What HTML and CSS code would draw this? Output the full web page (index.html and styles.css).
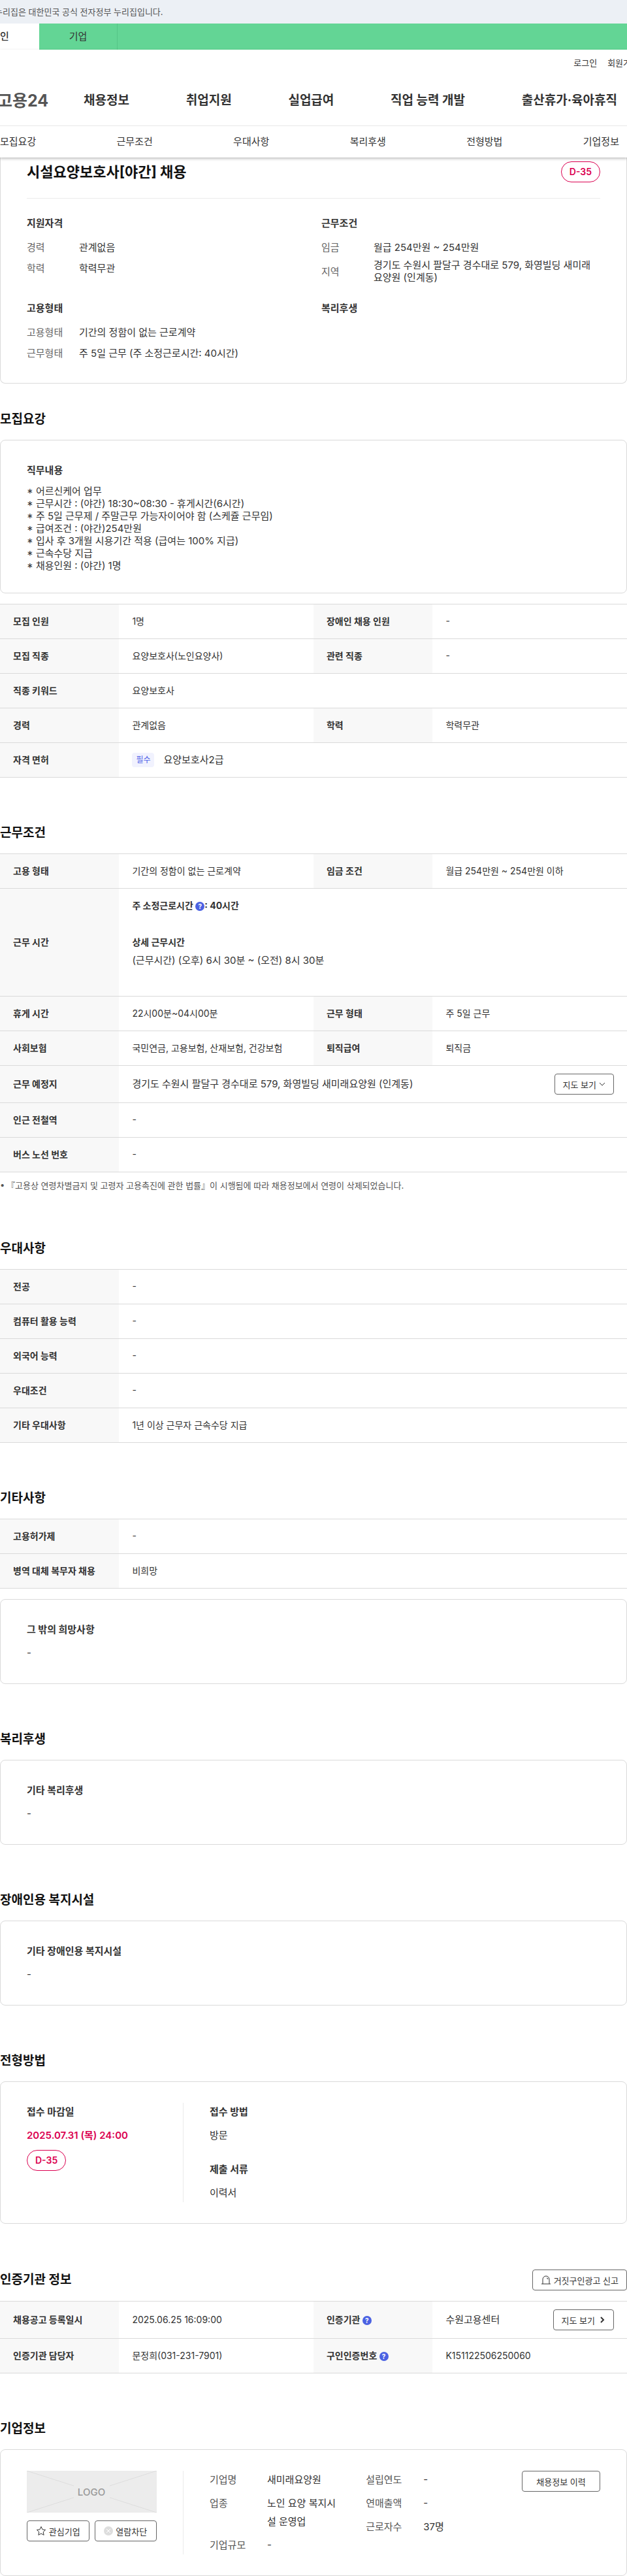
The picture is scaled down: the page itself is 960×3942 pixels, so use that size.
FILE: index.html
```html
<!DOCTYPE html>
<html lang="ko">
<head>
    <meta charset="UTF-8">
    <meta name="viewport" content="width=device-width, initial-scale=1.0">
    <title>시설요양보호사[야간] 채용 - 고용24</title>
    <link rel="stylesheet" href="styles.css">
</head>
<body>
    <div class="gov-banner"><p>누리집은 대한민국 공식 전자정부 누리집입니다.</p></div>
    <div class="site-tabs">
        <a class="site-tab active" href="#">개인</a>
        <a class="site-tab" href="#">기업</a>
    </div>
    <header class="header">
        <div class="util">
            <a href="#">로그인</a>
            <a href="#">회원가입</a>
        </div>
        <div class="gnb">
            <a class="logo" href="#">고용24</a>
            <nav class="gnb-menu">
                <a href="#">채용정보</a>
                <a href="#">취업지원</a>
                <a href="#">실업급여</a>
                <a href="#">직업 능력 개발</a>
                <a href="#">출산휴가·육아휴직</a>
            </nav>
        </div>
        <nav class="anchor-menu">
            <a href="#recruit">모집요강</a>
            <a href="#work">근무조건</a>
            <a href="#prefer">우대사항</a>
            <a href="#welfare">복리후생</a>
            <a href="#apply">전형방법</a>
            <a href="#company">기업정보</a>
        </nav>
    </header>

    <main>
        <!-- 채용 요약 -->
        <div class="card summary">
            <div class="summary-top">
                <h1>시설요양보호사[야간] 채용</h1>
                <span class="dday">D-35</span>
            </div>
            <div class="summary-grid">
                <div>
                    <h3>지원자격</h3>
                    <dl>
                        <div><dt>경력</dt><dd>관계없음</dd></div>
                        <div><dt>학력</dt><dd>학력무관</dd></div>
                    </dl>
                </div>
                <div>
                    <h3>근무조건</h3>
                    <dl>
                        <div><dt>임금</dt><dd>월급 254만원 ~ 254만원</dd></div>
                        <div><dt>지역</dt><dd>경기도 수원시 팔달구 경수대로 579, 화영빌딩 새미래요양원 (인계동)</dd></div>
                    </dl>
                </div>
                <div>
                    <h3>고용형태</h3>
                    <dl>
                        <div><dt>고용형태</dt><dd>기간의 정함이 없는 근로계약</dd></div>
                        <div><dt>근무형태</dt><dd>주 5일 근무 (주 소정근로시간: 40시간)</dd></div>
                    </dl>
                </div>
                <div>
                    <h3>복리후생</h3>
                </div>
            </div>
        </div>

        <section class="section first" id="recruit">
            <h2>모집요강</h2>
            <div class="card">
                <h3>직무내용</h3>
                <p class="job-desc">* 어르신케어 업무<br>
                * 근무시간 : (야간) 18:30~08:30 - 휴게시간(6시간)<br>
                * 주 5일 근무제 / 주말근무 가능자이어야 함 (스케쥴 근무임)<br>
                * 급여조건 : (야간)254만원<br>
                * 입사 후 3개월 시용기간 적용 (급여는 100% 지급)<br>
                * 근속수당 지급<br>
                * 채용인원 : (야간) 1명</p>
            </div>
            <table class="table spaced">
                <colgroup><col class="col-th"><col class="col-td"><col class="col-th"><col class="col-td"></colgroup>
                <tr><th>모집 인원</th><td>1명</td><th>장애인 채용 인원</th><td>-</td></tr>
                <tr><th>모집 직종</th><td>요양보호사(노인요양사)</td><th>관련 직종</th><td>-</td></tr>
                <tr><th>직종 키워드</th><td colspan="3">요양보호사</td></tr>
                <tr><th>경력</th><td>관계없음</td><th>학력</th><td>학력무관</td></tr>
                <tr><th>자격 면허</th><td colspan="3"><div class="license"><span class="tag">필수</span>요양보호사2급</div></td></tr>
            </table>
        </section>

        <section class="section" id="work">
            <h2>근무조건</h2>
            <table class="table">
                <colgroup><col class="col-th"><col class="col-td"><col class="col-th"><col class="col-td"></colgroup>
                <tr><th>고용 형태</th><td>기간의 정함이 없는 근로계약</td><th>임금 조건</th><td>월급 254만원 ~ 254만원 이하</td></tr>
                <tr>
                    <th>근무 시간</th>
                    <td colspan="3">
                        <p class="worktime"><strong>주 소정근로시간 <button class="help" type="button" aria-label="도움말">?</button>: 40시간</strong></p>
                        <p class="worktime"><strong>상세 근무시간</strong><br><span class="big">(근무시간) (오후) 6시 30분 ~ (오전) 8시 30분</span></p>
                    </td>
                </tr>
                <tr><th>휴게 시간</th><td>22시00분~04시00분</td><th>근무 형태</th><td>주 5일 근무</td></tr>
                <tr><th>사회보험</th><td>국민연금, 고용보험, 산재보험, 건강보험</td><th>퇴직급여</th><td>퇴직금</td></tr>
                <tr>
                    <th>근무 예정지</th>
                    <td colspan="3">
                        <div class="cell-row">
                            <span class="big">경기도 수원시 팔달구 경수대로 579, 화영빌딩 새미래요양원 (인계동)</span>
                            <button class="btn" type="button">지도 보기
                                <svg width="10" height="10" viewBox="0 0 10 10"><path d="M1 3l4 4 4-4"/></svg>
                            </button>
                        </div>
                    </td>
                </tr>
                <tr><th>인근 전철역</th><td colspan="3">-</td></tr>
                <tr><th>버스 노선 번호</th><td colspan="3">-</td></tr>
            </table>
            <ul class="note">
                <li>『고용상 연령차별금지 및 고령자 고용촉진에 관한 법률』이 시행됨에 따라 채용정보에서 연령이 삭제되었습니다.</li>
            </ul>
        </section>

        <section class="section" id="prefer">
            <h2>우대사항</h2>
            <table class="table">
                <colgroup><col class="col-th"><col></colgroup>
                <tr><th>전공</th><td>-</td></tr>
                <tr><th>컴퓨터 활용 능력</th><td>-</td></tr>
                <tr><th>외국어 능력</th><td>-</td></tr>
                <tr><th>우대조건</th><td>-</td></tr>
                <tr><th>기타 우대사항</th><td>1년 이상 근무자 근속수당 지급</td></tr>
            </table>
        </section>

        <section class="section">
            <h2>기타사항</h2>
            <table class="table">
                <colgroup><col class="col-th"><col></colgroup>
                <tr><th>고용허가제</th><td>-</td></tr>
                <tr><th>병역 대체 복무자 채용</th><td>비희망</td></tr>
            </table>
            <div class="card spaced">
                <h3>그 밖의 희망사항</h3>
                <p>-</p>
            </div>
        </section>

        <section class="section" id="welfare">
            <h2>복리후생</h2>
            <div class="card">
                <h3>기타 복리후생</h3>
                <p>-</p>
            </div>
        </section>

        <section class="section">
            <h2>장애인용 복지시설</h2>
            <div class="card">
                <h3>기타 장애인용 복지시설</h3>
                <p>-</p>
            </div>
        </section>

        <section class="section" id="apply">
            <h2>전형방법</h2>
            <div class="card split">
                <div class="split-left">
                    <h3>접수 마감일</h3>
                    <p class="deadline">2025.07.31 (목) 24:00</p>
                    <span class="dday">D-35</span>
                </div>
                <div class="split-right stack">
                    <div>
                        <h3>접수 방법</h3>
                        <p>방문</p>
                    </div>
                    <div>
                        <h3>제출 서류</h3>
                        <p>이력서</p>
                    </div>
                </div>
            </div>
        </section>

        <section class="section">
            <div class="title-row">
                <h2>인증기관 정보</h2>
                <button class="btn" type="button">
                    <svg width="16" height="16" viewBox="0 0 16 16"><path d="M1 14h14M3 14V7a5 5 0 0 1 10 0v7M9 5a2 2 0 0 1 2 2"/></svg>
                    거짓구인광고 신고
                </button>
            </div>
            <table class="table">
                <colgroup><col class="col-th"><col class="col-td"><col class="col-th"><col class="col-td"></colgroup>
                <tr>
                    <th>채용공고 등록일시</th>
                    <td>2025.06.25 16:09:00</td>
                    <th>인증기관 <button class="help" type="button" aria-label="도움말">?</button></th>
                    <td>
                        <div class="cell-row">
                            <span class="big">수원고용센터</span>
                            <button class="btn" type="button">지도 보기
                                <svg class="bold" width="12" height="12" viewBox="0 0 12 12"><path d="M5 2l4 4-4 4"/></svg>
                            </button>
                        </div>
                    </td>
                </tr>
                <tr>
                    <th>인증기관 담당자</th>
                    <td>문정희(031-231-7901)</td>
                    <th>구인인증번호 <button class="help" type="button" aria-label="도움말">?</button></th>
                    <td>K151122506250060</td>
                </tr>
            </table>
        </section>

        <section class="section" id="company">
            <h2>기업정보</h2>
            <div class="card split">
                <div class="split-left">
                    <svg class="company-logo" viewBox="0 0 199 64">
                        <rect width="199" height="64" fill="#ececec"/>
                        <path d="M0 0l72 23M199 0l-72 23M0 64l72-23M199 64l-72-23" stroke="#ddd"/>
                        <text x="99" y="38" text-anchor="middle">LOGO</text>
                    </svg>
                    <div class="company-btns">
                        <button class="btn" type="button">
                            <svg width="16" height="16" viewBox="0 0 16 16"><path d="M8 1.500l2 4.300 4.600.6-3.400 3.200.9 4.700L8 12l-4.100 2.300.9-4.700L1.400 6.400 6 5.800z"/></svg>
                            관심기업
                        </button>
                        <button class="btn" type="button">
                            <svg width="14" height="14" viewBox="0 0 14 14"><circle class="disc" cx="7" cy="7" r="7"/><path class="cross" d="M4 4l6 6M10 4l-6 6"/></svg>
                            열람차단
                        </button>
                    </div>
                </div>
                <div class="split-right company">
                    <dl class="company-main">
                        <div><dt>기업명</dt><dd>새미래요양원</dd></div>
                        <div><dt>업종</dt><dd>노인 요양 복지시설 운영업</dd></div>
                        <div><dt>기업규모</dt><dd>-</dd></div>
                    </dl>
                    <dl class="company-sub">
                        <div><dt>설립연도</dt><dd>-</dd></div>
                        <div><dt>연매출액</dt><dd>-</dd></div>
                        <div><dt>근로자수</dt><dd>37명</dd></div>
                    </dl>
                    <button class="btn wide" type="button">채용정보 이력</button>
                </div>
            </div>
        </section>
    </main>
</body>
</html>
```
FILE: styles.css
```css
* {
    box-sizing: border-box;
}
body {
    margin: 0;
    font-family: Inter, "Noto Sans CJK KR", sans-serif;
    font-size: 15px;
    font-feature-settings: "case";
    line-height: 28px;
    color: #333;
    background: #fff;
    overflow-x: hidden;
}
h1, h2, h3, p, dl, dd, ul {
    margin: 0;
    padding: 0;
}
a {
    color: inherit;
    text-decoration: none;
}
button {
    font-family: inherit;
    cursor: pointer;
}

/* 상단 */
.gov-banner {
    height: 36px;
    overflow: hidden;
    background: #ecf0f5;
    color: #555;
    font-size: 13px;
    line-height: 36px;
}
.gov-banner p {
    margin-left: -8px;
}
.site-tabs {
    display: flex;
    height: 40px;
    background: #63d595;
    overflow: hidden;
}
.site-tab {
    width: 120px;
    border-right: 1px solid #54c586;
    text-align: center;
    line-height: 40px;
}
.site-tab.active {
    margin-left: -60px;
    border: 0;
    background: #fff;
    font-weight: 500;
}
.header {
    position: relative;
    background: #fff;
    box-shadow: 0 2px 4px rgba(0, 0, 0, 0.25);
}
.util {
    display: flex;
    justify-content: flex-end;
    gap: 16px;
    height: 40px;
    margin-right: -18px;
    font-size: 13px;
    line-height: 40px;
}
.gnb {
    display: flex;
    align-items: center;
    height: 77px;
    border-bottom: 1px solid #e8e8e8;
}
.logo {
    width: 132px;
    margin-left: -4px;
    font-size: 25px;
    font-weight: 700;
    color: #555;
}
.gnb-menu {
    display: flex;
    flex: 1;
    justify-content: space-between;
    padding-right: 15px;
    font-size: 19px;
    font-weight: 700;
    white-space: nowrap;
}
.anchor-menu {
    display: flex;
    justify-content: space-between;
    padding-right: 12px;
    line-height: 48px;
}

/* 카드 */
.card {
    padding: 32px 40px;
    border: 1px solid #dadada;
    border-radius: 8px;
}
.card h3 {
    margin-bottom: 8px;
    font-size: 15px;
    font-weight: 700;
}
.spaced {
    margin-top: 16px;
}
.dday {
    display: inline-block;
    height: 32px;
    padding: 0 12px;
    border: 1px solid #db0050;
    border-radius: 16px;
    font-size: 14px;
    font-weight: 600;
    line-height: 30px;
    color: #db0050;
}
.summary {
    padding-top: 6px;
    border-top: 0;
    border-radius: 0 0 8px 8px;
}
.summary-top {
    display: flex;
    justify-content: space-between;
    align-items: center;
    padding-bottom: 24px;
    border-bottom: 1px solid #ebebeb;
}
.summary-top h1 {
    font-size: 22px;
    line-height: 32px;
    color: #111;
}
.summary-grid {
    display: grid;
    grid-template-columns: 1fr 1fr;
    gap: 24px;
    padding-top: 24px;
}
.summary dl {
    display: grid;
    gap: 4px;
}
.summary dl div {
    display: flex;
    align-items: center;
    min-height: 28px;
    line-height: 19px;
}
.summary dt {
    flex: 0 0 80px;
    color: #666;
}
.summary dd {
    padding-right: 8px;
}
.job-desc {
    line-height: 19px;
}

/* 섹션 */
.section {
    padding-top: 70px;
}
.section.first {
    padding-top: 40px;
}
.section h2 {
    margin-bottom: 16px;
    font-size: 19px;
    line-height: 30px;
    color: #111;
}
.title-row {
    display: flex;
    justify-content: space-between;
    align-items: center;
    margin-bottom: 16px;
}
.title-row h2 {
    margin: 0;
}

/* 표 */
.table {
    width: 100%;
    border-collapse: collapse;
    table-layout: fixed;
}
.col-th {
    width: 19%;
}
.col-td {
    width: 31%;
}
.table th,
.table td {
    padding: 12px 20px;
    border-top: 1px solid #dadada;
    border-bottom: 1px solid #dadada;
    font-size: 14px;
    line-height: 28px;
    text-align: left;
}
.table th {
    padding-right: 8px;
    background: #f8f8f8;
    font-weight: 700;
}
.worktime {
    margin-bottom: 28px;
}
.big {
    font-size: 15px;
}
.cell-row {
    display: flex;
    justify-content: space-between;
    align-items: center;
}
.license {
    display: flex;
    align-items: center;
    gap: 14px;
    font-size: 15px;
}
.tag {
    padding: 0 6px;
    border-radius: 4px;
    background: #f1f2fe;
    color: #4f63e7;
    font-size: 12px;
    line-height: 22px;
}
.help {
    width: 14px;
    height: 14px;
    padding: 0;
    border: 0;
    border-radius: 50%;
    background: #4b62e2;
    color: #fff;
    font-size: 10px;
    font-weight: 700;
    line-height: 14px;
}
.note {
    padding-top: 8px;
    list-style: none;
    font-size: 13px;
    line-height: 24px;
    color: #555;
}
.note li {
    display: flex;
}
.note li::before {
    content: "•";
    flex: 0 0 10px;
}

/* 버튼 */
.btn {
    display: inline-flex;
    align-items: center;
    justify-content: center;
    gap: 4px;
    height: 32px;
    padding: 0 12px;
    border: 1px solid #666;
    border-radius: 4px;
    background: #fff;
    color: #333;
    font-size: 13px;
    white-space: nowrap;
}
.btn svg {
    fill: none;
    stroke: #333;
}
.btn svg.bold {
    stroke-width: 2;
}
.btn .disc {
    fill: #ddd;
    stroke: none;
}
.btn .cross {
    stroke: #fff;
}
.btn.wide {
    width: 120px;
}

/* 좌우 분할 카드 */
.split {
    display: flex;
}
.split-left {
    flex: 0 0 240px;
    padding-right: 40px;
    border-right: 1px solid #ebebeb;
}
.split-right {
    flex: 1;
    padding-left: 40px;
}
.stack {
    display: grid;
    gap: 24px;
}
.deadline {
    margin-bottom: 8px;
    font-weight: 600;
    color: #db0050;
}
.company-logo {
    display: block;
    width: 100%;
    margin-bottom: 12px;
}
.company-logo text {
    font-size: 15px;
    font-weight: 500;
    fill: #999;
}
.company-btns {
    display: grid;
    grid-template-columns: 1fr 1fr;
    gap: 8px;
}
.company-btns .btn {
    padding: 0;
}
.company {
    display: flex;
    align-items: flex-start;
}
.company dl {
    display: grid;
    gap: 8px;
}
.company dl div {
    display: flex;
}
.company dt {
    flex: 0 0 88px;
    color: #555;
}
.company-main {
    flex: 0 0 40%;
    padding-right: 36px;
    word-break: break-all;
}
.company-sub {
    flex: 1;
}
```
